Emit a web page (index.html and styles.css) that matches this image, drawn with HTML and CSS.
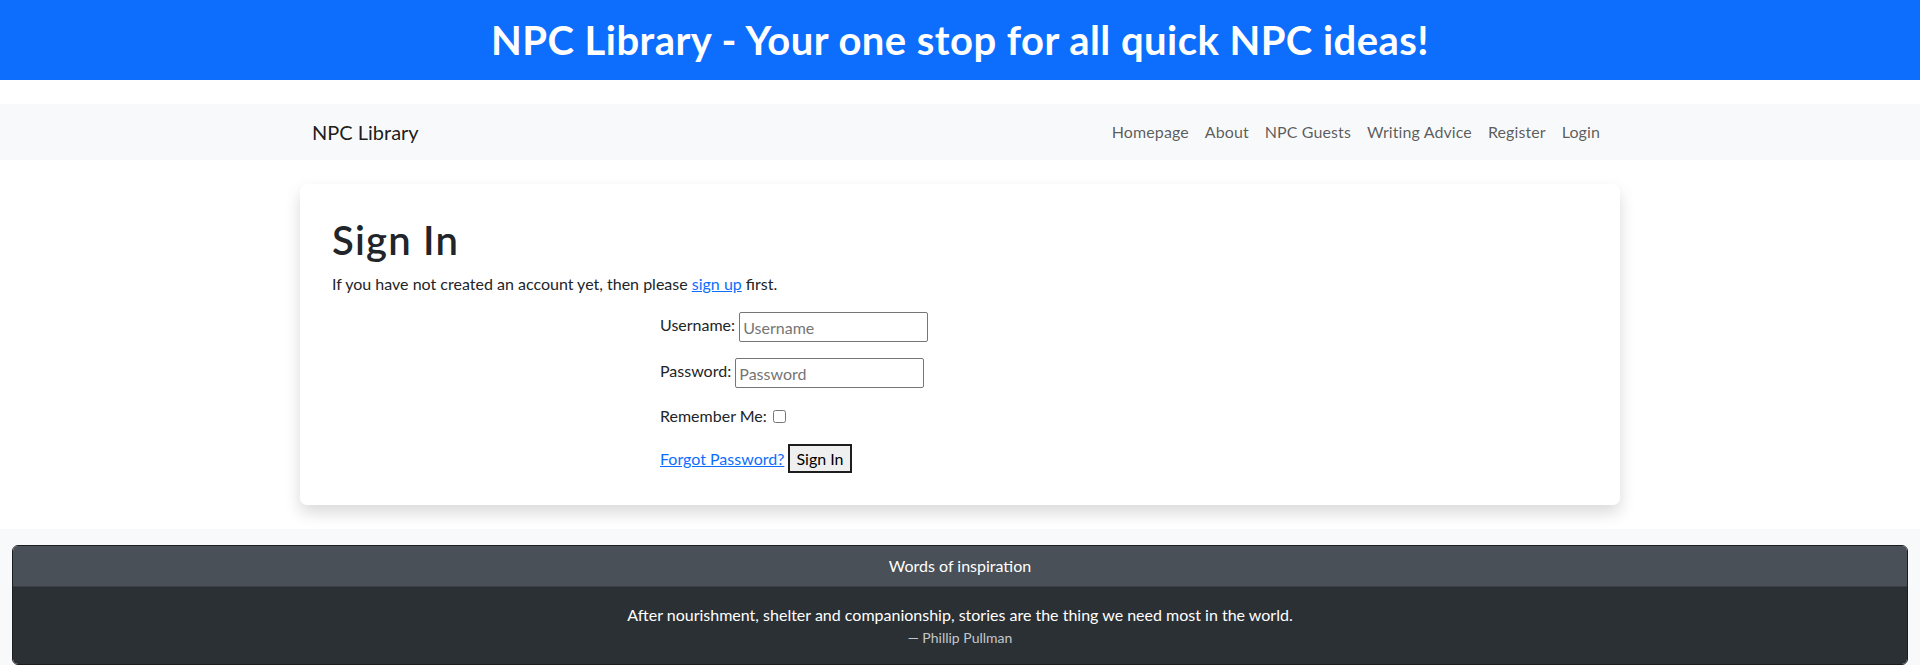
FILE: index.html
```html
<!DOCTYPE html>
<html lang="en">
<head>
<meta charset="utf-8">
<title>NPC Library - Sign In</title>
<link rel="stylesheet" href="styles.css">
</head>
<body>
<header class="banner">
  <h1 class="banner-title">NPC Library - Your one stop for all quick NPC ideas!</h1>
</header>
<div class="page">
  <nav class="navbar">
    <div class="nav-container">
      <a class="brand" href="#">NPC Library</a>
      <ul class="nav-links">
        <li><a class="nav-link" href="#">Homepage</a></li>
        <li><a class="nav-link" href="#">About</a></li>
        <li><a class="nav-link" href="#">NPC Guests</a></li>
        <li><a class="nav-link" href="#">Writing Advice</a></li>
        <li><a class="nav-link" href="#">Register</a></li>
        <li><a class="nav-link" href="#">Login</a></li>
      </ul>
    </div>
  </nav>
  <main class="card">
    <h1 class="card-title">Sign In</h1>
    <p class="intro">If you have not created an account yet, then please <a class="link" href="#">sign up</a> first.</p>
    <form class="signin-form">
      <p class="form-row"><label for="username">Username:</label> <input class="text-input" id="username" type="text" placeholder="Username"></p>
      <p class="form-row"><label for="password">Password:</label> <input class="text-input" id="password" type="password" placeholder="Password"></p>
      <p class="form-row"><label for="remember">Remember Me:</label> <input class="check" id="remember" type="checkbox"></p>
      <p class="form-row last"><a class="link" href="#">Forgot Password?</a> <button class="btn" type="submit">Sign In</button></p>
    </form>
  </main>
</div>
<footer class="quote-card">
  <div class="quote-header">Words of inspiration</div>
  <div class="quote-body">
    <blockquote class="quote">
      <p>After nourishment, shelter and companionship, stories are the thing we need most in the world.</p>
    </blockquote>
    <div class="quote-author">— Phillip Pullman</div>
  </div>
</footer>
</body>
</html>
```
FILE: styles.css
```css
* { box-sizing: border-box; }

body {
  margin: 0;
  background: #f8f9fa;
  color: #212529;
  font-family: Lato, "Noto Sans", sans-serif;
  font-size: 16px;
  line-height: 1.5;
}

.banner {
  background: #0d6efd;
  padding: 16px 0;
  text-align: center;
}

.banner-title {
  margin: 0;
  color: #fff;
  font-size: 40px;
  line-height: 48px;
  font-weight: 700;
  letter-spacing: 0.45px;
}

.page {
  background: #fff;
  padding: 24px 0;
}

.navbar {
  background: #f8f9fa;
  padding: 8px 0;
}

.nav-container {
  width: 1320px;
  margin: 0 auto;
  padding: 0 12px;
  display: flex;
  align-items: center;
  justify-content: space-between;
}

.brand {
  font-size: 20px;
  line-height: 30px;
  padding: 5px 0;
  color: rgba(0, 0, 0, 0.9);
  text-decoration: none;
}

.nav-links {
  list-style: none;
  margin: 0;
  padding: 0;
  display: flex;
}

.nav-link {
  display: block;
  padding: 8px;
  color: rgba(0, 0, 0, 0.65);
  text-decoration: none;
  letter-spacing: 0.1px;
}

.card {
  display: block;
  width: 1320px;
  margin: 24px auto 0;
  padding: 32px;
  background: #fff;
  border-radius: 7px;
  box-shadow: 0 8px 16px rgba(0, 0, 0, 0.15);
}

.card-title {
  margin: 0 0 8px;
  font-size: 40px;
  line-height: 48px;
  font-weight: 600;
  letter-spacing: 1.2px;
}

.intro {
  margin: 0 0 16px;
}

.link {
  color: #0d6efd;
  text-decoration: underline;
}

.signin-form {
  margin-left: 328px;
}

.form-row {
  margin: 0 0 16px;
  line-height: 24px;
}

.form-row.last {
  margin-bottom: 0;
}

.text-input {
  width: 189px;
  height: 30px;
  padding: 1px 3px;
  border: 1px solid #767676;
  border-radius: 2px;
  font: inherit;
  color: #212529;
  vertical-align: middle;
}

.text-input::placeholder {
  color: #757575;
}

.check {
  width: 13px;
  height: 13px;
  margin: 3px 3px 3px 2px;
  vertical-align: -1px;
}

.btn {
  font: inherit;
  line-height: 24px;
  padding: 1px 6px 0;
  border: 2px solid #1e1e1e;
  background: #efefef;
  color: #000;
  border-radius: 0;
}

.quote-card {
  margin: 16px 12px 0;
  border: 1px solid #1b1e21;
  border-radius: 6px;
  overflow: hidden;
  color: #fff;
  text-align: center;
}

.quote-header {
  background: #495057;
  padding: 8px 16px;
  border-bottom: 1px solid #3a3f44;
}

.quote-body {
  background: #2b3035;
  padding: 16px 16px 16px;
}

.quote {
  margin: 0;
}

.quote p {
  margin: 0;
}

.quote-author {
  font-size: 14px;
  line-height: 21px;
  color: #c3c7cb;
}
```
